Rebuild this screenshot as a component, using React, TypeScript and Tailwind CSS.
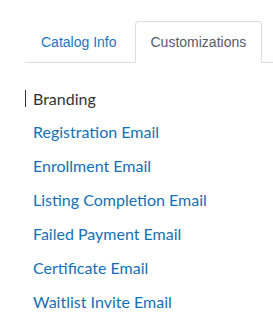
const TABS = [
  { label: "Catalog Info", active: false },
  { label: "Customizations", active: true },
];

const ITEMS = [
  "Branding",
  "Registration Email",
  "Enrollment Email",
  "Listing Completion Email",
  "Failed Payment Email",
  "Certificate Email",
  "Waitlist Invite Email",
];

export default function App() {
  return (
    <div className="min-h-screen bg-white pt-[21px] pl-[25px]">
      {/* Tabs */}
      <ul className="flex border-b border-[#ddd] font-['Liberation_Sans',Arial,sans-serif] text-[14px]">
        {TABS.map((tab) => (
          <li key={tab.label} className="-mb-px mr-[2px]">
            <a
              href="#"
              className={
                tab.active
                  ? "block px-[15px] py-[10px] leading-5 rounded-t border border-[#ddd] border-b-white bg-white text-[#555d66]"
                  : "block px-[15px] py-[10px] leading-5 rounded-t border border-transparent text-[#1a75bf]"
              }
            >
              {tab.label}
            </a>
          </li>
        ))}
      </ul>

      {/* Section list */}
      <ul className="mt-[18px] font-['Lato',sans-serif] text-[16px]">
        {ITEMS.map((item, i) => (
          <li key={item} className="flex h-[34px] items-center">
            {i === 0 ? (
              <span className="border-l-[1.5px] border-[#333] pl-[7px] leading-[17px] text-[#333]">
                {item}
              </span>
            ) : (
              <a href="#" className="pl-[8px] text-[#1570b3]">
                {item}
              </a>
            )}
          </li>
        ))}
      </ul>
    </div>
  );
}
